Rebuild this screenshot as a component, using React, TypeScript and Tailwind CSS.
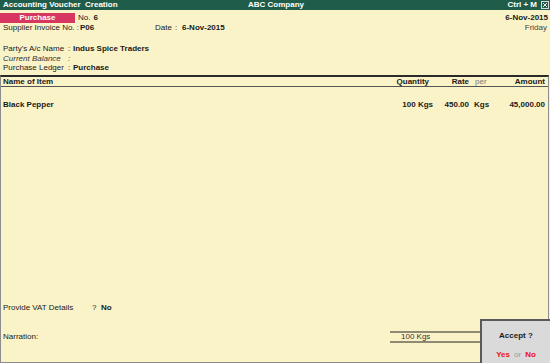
import React from "react";

export default function App() {
  return (
    <div className="relative w-[550px] h-[363px] overflow-hidden bg-[#faf3c8] font-['Liberation_Sans',Arial,sans-serif] text-[8px] leading-[10px] text-[#1a1a1a] flex flex-col">
      {/* title bar */}
      <div className="h-[10px] bg-[#1f5c4a] text-white font-bold grid grid-cols-3 items-center pl-[3px] pr-[1px]">
        <span className="whitespace-pre">Accounting Voucher  Creation</span>
        <span className="text-center">ABC Company</span>
        <div className="flex items-center justify-end gap-[4px]">
          <span>Ctrl + M</span>
          <span className="w-[8px] h-[8px] border border-[#d8d8d8] flex items-center justify-center">
            <svg width="6" height="6" viewBox="0 0 6 6">
              <path d="M1 1L5 5M5 1L1 5" stroke="#e8e8e8" strokeWidth="1" />
            </svg>
          </span>
        </div>
      </div>

      {/* voucher head */}
      <div className="mt-[3px] h-[10px] flex items-center pr-[2px]">
        <div className="w-[75px] h-[10px] bg-[#d6365f] text-white font-bold text-center">Purchase</div>
        <span className="ml-[3px]">No.</span>
        <span className="ml-[3px] font-bold">6</span>
        <span className="ml-auto font-bold">6-Nov-2015</span>
      </div>
      <div className="h-[10px] flex items-center pl-[3px] pr-[3px]">
        <span className="w-[77px]">Supplier Invoice No. :</span>
        <span className="w-[75px] font-bold">P06</span>
        <span className="w-[20px]">Date</span>
        <span className="w-[7px]">:</span>
        <span className="font-bold">6-Nov-2015</span>
        <span className="ml-auto text-[#444]">Friday</span>
      </div>

      <div className="mt-[11px] pl-[3px] flex flex-col">
        <div className="h-[10px] flex">
          <span className="w-[65px]">Party's A/c Name</span>
          <span className="w-[5px]">:</span>
          <span className="font-bold">Indus Spice Traders</span>
        </div>
        <div className="h-[9px] flex italic text-[#333]">
          <span className="w-[65px]">Current Balance</span>
          <span className="w-[5px]">:</span>
        </div>
        <div className="h-[10px] flex">
          <span className="w-[65px]">Purchase Ledger</span>
          <span className="w-[5px]">:</span>
          <span className="font-bold">Purchase</span>
        </div>
      </div>

      {/* items table */}
      <div className="mt-[2px] flex-1 flex flex-col border-t-2 border-t-[#2a2a2a] border-l border-r border-b border-[#8d8d8d] mr-[1px]">
        <div className="h-[10px] flex items-center font-bold border-b border-[#555] pl-[2px] pr-[3px]">
          <span className="flex-1">Name of Item</span>
          <span className="w-[60px] text-right pr-[4px]">Quantity</span>
          <span className="w-[36px] text-right">Rate</span>
          <span className="w-[20px] pl-[6px] font-normal text-[#777]">per</span>
          <span className="w-[56px] text-right">Amount</span>
        </div>

        <div className="mt-[13px] h-[10px] flex items-center font-bold pl-[2px] pr-[3px]">
          <span className="flex-1">Black Pepper</span>
          <span className="w-[60px] text-right">100 Kgs</span>
          <span className="w-[36px] text-right">450.00</span>
          <span className="w-[20px] pl-[5px]">Kgs</span>
          <span className="w-[56px] text-right">45,000.00</span>
        </div>

        <div className="flex-1" />

        <div className="h-[10px] flex items-center pl-[2px]">
          <span className="w-[89px]">Provide VAT Details</span>
          <span className="w-[9px]">?</span>
          <span className="font-bold">No</span>
        </div>

        <div className="mt-[18px] mb-[19px] h-[12px] flex items-center pl-[2px]">
          <span className="flex-1">Narration:</span>
          <div className="w-[158px] h-[12px] border-y-2 border-[#8f8a73] flex items-center pl-[11px] text-[#333]">
            100 Kgs
          </div>
        </div>
      </div>

      {/* accept prompt */}
      <div className="absolute right-0 bottom-0 w-[70px] h-[44px] bg-[#dadada] border-l-2 border-t-2 border-[#5a5a5a] flex flex-col items-center">
        <span className="mt-[10px] h-[10px] font-bold">Accept ?</span>
        <div className="mt-auto mb-[3px] h-[10px] flex gap-[4px] font-bold">
          <span className="text-[#e8111b]">Yes</span>
          <span className="font-normal text-[#9a9a9a]">or</span>
          <span className="text-[#e8111b]">No</span>
        </div>
      </div>
    </div>
  );
}
